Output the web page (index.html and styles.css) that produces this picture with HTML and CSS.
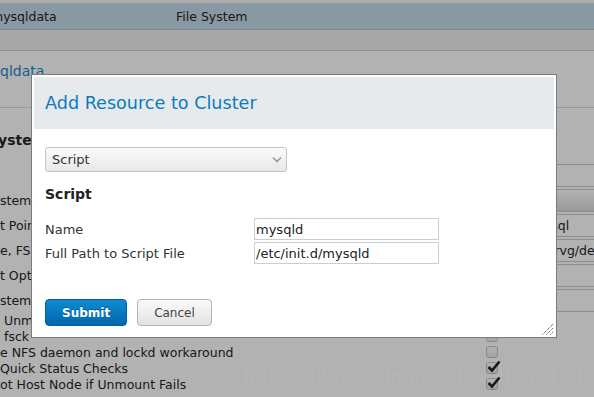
FILE: index.html
```html
<!DOCTYPE html>
<html lang="en">
  <head>
    <meta charset="UTF-8" />
    <meta name="viewport" content="width=device-width, initial-scale=1.0" />
    <title>Add Resource to Cluster</title>
    <link rel="stylesheet" href="styles.css">
  </head>
  <body>
    <!-- page behind the dialog (scrolled to the right) -->
    <div class="page">
      <div class="top-strip"></div>
      <div class="list-row">
        <span class="list-name">mysqldata</span>
        <span class="list-type">File System</span>
      </div>
      <div class="list-foot"></div>
      <div class="resource-title"><a href="#">qldata</a></div>

      <div class="resource-form">
        <h2>yste</h2>
        <div class="field-rows">
          <div class="field-row">
            <span class="field-label"></span>
            <span class="field-box"></span>
          </div>
          <div class="field-row">
            <span class="field-label">stem</span>
            <span class="field-box field-select"></span>
          </div>
          <div class="field-row">
            <span class="field-label">t Poin</span>
            <span class="field-box">/var/lib/mysql</span>
          </div>
          <div class="field-row">
            <span class="field-label">e, FS</span>
            <span class="field-box">/dev/mastervg/devlv</span>
          </div>
          <div class="field-row">
            <span class="field-label">t Opt</span>
            <span class="field-box"></span>
          </div>
          <div class="field-row">
            <span class="field-label">stem</span>
            <span class="field-box"></span>
          </div>
        </div>

        <div class="check-rows">
          <div class="check-row">
            <span class="field-label indent">Unm</span>
            <span class="checkbox"></span>
          </div>
          <div class="check-row">
            <span class="field-label indent">fsck</span>
            <span class="checkbox"></span>
          </div>
          <div class="check-row">
            <span class="field-label">e NFS daemon and lockd workaround</span>
            <span class="checkbox"></span>
          </div>
          <div class="check-row">
            <span class="field-label">Quick Status Checks</span>
            <span class="checkbox checked">
              <svg class="tick" width="14" height="13" viewBox="0 0 14 13"><path d="M1.5 7 L5 10.5 L12.5 1.5" fill="none" stroke="#222" stroke-width="2.6"/></svg>
            </span>
          </div>
          <div class="check-row">
            <span class="field-label">ot Host Node if Unmount Fails</span>
            <span class="checkbox checked">
              <svg class="tick" width="14" height="13" viewBox="0 0 14 13"><path d="M1.5 7 L5 10.5 L12.5 1.5" fill="none" stroke="#222" stroke-width="2.6"/></svg>
            </span>
          </div>
        </div>
      </div>
    </div>

    <div class="overlay"></div>

    <div class="modal">
      <div class="modal-header">
        <h1>Add Resource to Cluster</h1>
      </div>
      <div class="modal-body">
        <div class="select">
          <span>Script</span>
          <svg width="10" height="7" viewBox="0 0 10 7"><path d="M1 1.5 L5 5.5 L9 1.5" fill="none" stroke="#9a9a9a" stroke-width="1.6"/></svg>
        </div>

        <h3>Script</h3>

        <div class="form-row">
          <label for="res-name">Name</label>
          <input id="res-name" type="text" value="mysqld">
        </div>
        <div class="form-row">
          <label for="res-path">Full Path to Script File</label>
          <input id="res-path" type="text" value="/etc/init.d/mysqld">
        </div>

        <div class="buttons">
          <button class="btn btn-primary">Submit</button>
          <button class="btn">Cancel</button>
        </div>
      </div>
      <svg class="grip" width="12" height="12" viewBox="0 0 12 12">
        <path d="M0.5 11.5 L11.5 0.5 M4.5 11.5 L11.5 4.5 M8.5 11.5 L11.5 8.5" stroke="#333" stroke-width="1" stroke-dasharray="1 1"/>
      </svg>
    </div>

    <div class="watermark">https://blog.csdn.net/xbw_linux123</div>
  </body>
</html>
```

FILE: styles.css
```css
* {
  box-sizing: border-box;
  margin: 0;
  padding: 0;
}

body {
  position: relative;
  width: 594px;
  height: 397px;
  overflow: hidden;
  background: #fff;
  color: #333;
  font-family: "DejaVu Sans", "Noto Sans", sans-serif;
  font-size: 13px;
}

/* ---- page behind ---- */

.page {
  color: #262626;
  font-size: 12.5px;
}

.top-strip {
  height: 3px;
  background: #f7f7f7;
}

.list-row {
  display: flex;
  align-items: center;
  height: 27px;
  background: #c5dcea;
  border-bottom: 1px solid #b5c9d6;
}

.list-name {
  width: 185px;
  margin-left: -9px;
}

.list-foot {
  height: 21px;
  background: #f0f0f0;
  border-bottom: 1px solid #cccccc;
}

.resource-title {
  height: 57px;
  padding-top: 12px;
  border-bottom: 1px solid #dcdcdc;
}

.resource-title a {
  color: #1f86c8;
  font-size: 14px;
  text-decoration: none;
}

.resource-form {
  padding-top: 23px;
}

.resource-form h2 {
  font-size: 14px;
  line-height: 18px;
  margin: 0 0 15px -2px;
}

.field-rows {
  display: flex;
  flex-direction: column;
  gap: 2px;
}

.field-row {
  display: flex;
  align-items: center;
  height: 23px;
}

.field-label {
  flex: 0 0 481px;
  white-space: nowrap;
}

.field-label.indent {
  padding-left: 4px;
}

.field-box {
  flex: 0 0 200px;
  height: 100%;
  padding-left: 2px;
  background: #fff;
  border: 1px solid #cbcbcb;
  line-height: 21px;
  white-space: nowrap;
  overflow: hidden;
}

.field-select {
  background: linear-gradient(#ffffff, #dcdcdc);
}

.check-row {
  display: flex;
  align-items: center;
  height: 16px;
}

.checkbox {
  position: relative;
  width: 12px;
  height: 12px;
  margin-left: 5px;
  border: 1px solid #c2c2c2;
  border-radius: 3px;
  background: linear-gradient(#ffffff, #ebebeb);
}

.tick {
  position: absolute;
  left: 0;
  top: -3px;
}

.overlay {
  position: fixed;
  inset: 0;
  background: rgba(0, 0, 0, 0.3);
}

/* ---- dialog ---- */

.modal {
  position: absolute;
  left: 31px;
  top: 74px;
  width: 526px;
  height: 264px;
  padding: 2px;
  background: #fff;
  border: 1px solid #7b7b7b;
}

.modal-header {
  display: flex;
  align-items: center;
  height: 52px;
  padding: 0 11px;
  background: #e6eaed;
}

.modal-header h1 {
  font-size: 17.6px;
  font-weight: normal;
  color: #0b7ac0;
}

.modal-body {
  padding: 18px 11px 0;
}

.select {
  display: flex;
  align-items: center;
  justify-content: space-between;
  width: 242px;
  height: 25px;
  padding: 0 4px 0 6px;
  color: #333;
  border: 1px solid #c4c4c4;
  border-radius: 3px;
  background: linear-gradient(#fbfbfb, #e8e8e8);
}

.modal-body h3 {
  margin: 14px 0 15px;
  font-size: 14px;
  line-height: 17px;
  color: #222;
}

.form-row {
  display: flex;
  align-items: center;
  height: 22px;
  margin-bottom: 2px;
}

.form-row label {
  width: 209px;
  color: #333;
}

.form-row input {
  width: 185px;
  height: 22px;
  padding: 0 1px;
  border: 1px solid #c8ced4;
  font-family: inherit;
  font-size: 13px;
  color: #222;
  outline: none;
}

.buttons {
  display: flex;
  gap: 10px;
  margin-top: 35px;
}

.btn {
  height: 27px;
  padding: 0 16px;
  font-family: inherit;
  font-size: 12px;
  color: #444;
  border: 1px solid #b3b3b3;
  border-radius: 4px;
  background: linear-gradient(#fafafa, #e2e2e2);
  cursor: pointer;
}

.btn-primary {
  color: #fff;
  font-weight: bold;
  border-color: #00609f;
  background: linear-gradient(#1189d2, #0068ac);
  text-shadow: 0 -1px 0 rgba(0, 0, 0, 0.25);
}

.grip {
  position: absolute;
  right: 2px;
  bottom: 2px;
}

.watermark {
  position: absolute;
  left: 243px;
  top: 363px;
  font-family: "Liberation Serif", serif;
  font-size: 24px;
  line-height: 24px;
  color: rgba(255, 255, 255, 0.05);
  white-space: nowrap;
}
```
